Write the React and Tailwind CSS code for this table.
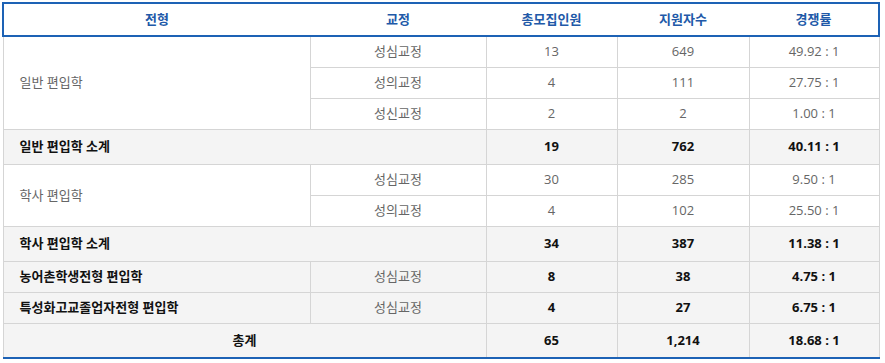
import React from "react";

const font = { fontFamily: '"Open Sans", "Noto Sans CJK KR", sans-serif' };

function Td({ children, className = "", ...rest }) {
  return (
    <td className={"border border-[#d5d5d5] text-center align-middle p-0 " + className} {...rest}>
      {children}
    </td>
  );
}

export default function App() {
  const head = ["전형", "교정", "총모집인원", "지원자수", "경쟁률"];
  return (
    <div className="bg-white w-[885px] h-[363px] pl-[2px] pt-[2px]" style={font}>
      <table className="border-collapse table-fixed w-[876px] text-[13px] leading-none">
        <colgroup>
          <col className="w-[307px]" />
          <col className="w-[176px]" />
          <col className="w-[131px]" />
          <col className="w-[132px]" />
          <col className="w-[130px]" />
        </colgroup>
        <thead>
          <tr className="h-[33px]">
            {head.map((h, i) => (
              <th
                key={h}
                className={
                  "border-y-2 border-[#1d62b5] text-[#2159a8] font-semibold text-center p-0 " +
                  (i === 0 ? "border-l-2 " : "") +
                  (i === 4 ? "border-r-2 " : "")
                }
              >
                {h}
              </th>
            ))}
          </tr>
        </thead>
        <tbody className="text-[#666]">
          <tr className="h-[31px]">
            <Td rowSpan={3} className="text-left pl-4">일반 편입학</Td>
            <Td>성심교정</Td>
            <Td>13</Td>
            <Td>649</Td>
            <Td>49.92 : 1</Td>
          </tr>
          <tr className="h-[31px]">
            <Td>성의교정</Td>
            <Td>4</Td>
            <Td>111</Td>
            <Td>27.75 : 1</Td>
          </tr>
          <tr className="h-[31px]">
            <Td>성신교정</Td>
            <Td>2</Td>
            <Td>2</Td>
            <Td>1.00 : 1</Td>
          </tr>
          <tr className="h-[35px] bg-[#f4f4f4] text-[#111] font-bold">
            <Td colSpan={2} className="text-left pl-4">일반 편입학 소계</Td>
            <Td>19</Td>
            <Td>762</Td>
            <Td>40.11 : 1</Td>
          </tr>
          <tr className="h-[31px]">
            <Td rowSpan={2} className="text-left pl-4">학사 편입학</Td>
            <Td>성심교정</Td>
            <Td>30</Td>
            <Td>285</Td>
            <Td>9.50 : 1</Td>
          </tr>
          <tr className="h-[31px]">
            <Td>성의교정</Td>
            <Td>4</Td>
            <Td>102</Td>
            <Td>25.50 : 1</Td>
          </tr>
          <tr className="h-[35px] bg-[#f4f4f4] text-[#111] font-bold">
            <Td colSpan={2} className="text-left pl-4">학사 편입학 소계</Td>
            <Td>34</Td>
            <Td>387</Td>
            <Td>11.38 : 1</Td>
          </tr>
          <tr className="h-[31px] bg-[#f4f4f4]">
            <Td className="text-left pl-4 font-bold text-[#111]">농어촌학생전형 편입학</Td>
            <Td>성심교정</Td>
            <Td className="font-bold text-[#111]">8</Td>
            <Td className="font-bold text-[#111]">38</Td>
            <Td className="font-bold text-[#111]">4.75 : 1</Td>
          </tr>
          <tr className="h-[31px] bg-[#f4f4f4]">
            <Td className="text-left pl-4 font-bold text-[#111]">특성화고교졸업자전형 편입학</Td>
            <Td>성심교정</Td>
            <Td className="font-bold text-[#111]">4</Td>
            <Td className="font-bold text-[#111]">27</Td>
            <Td className="font-bold text-[#111]">6.75 : 1</Td>
          </tr>
          <tr className="h-[35px] bg-[#f4f4f4] text-[#111] font-bold">
            <Td colSpan={2} className="border-b-2 border-b-[#1d62b5]">총계</Td>
            <Td className="border-b-2 border-b-[#1d62b5]">65</Td>
            <Td className="border-b-2 border-b-[#1d62b5]">1,214</Td>
            <Td className="border-b-2 border-b-[#1d62b5]">18.68 : 1</Td>
          </tr>
        </tbody>
      </table>
    </div>
  );
}
